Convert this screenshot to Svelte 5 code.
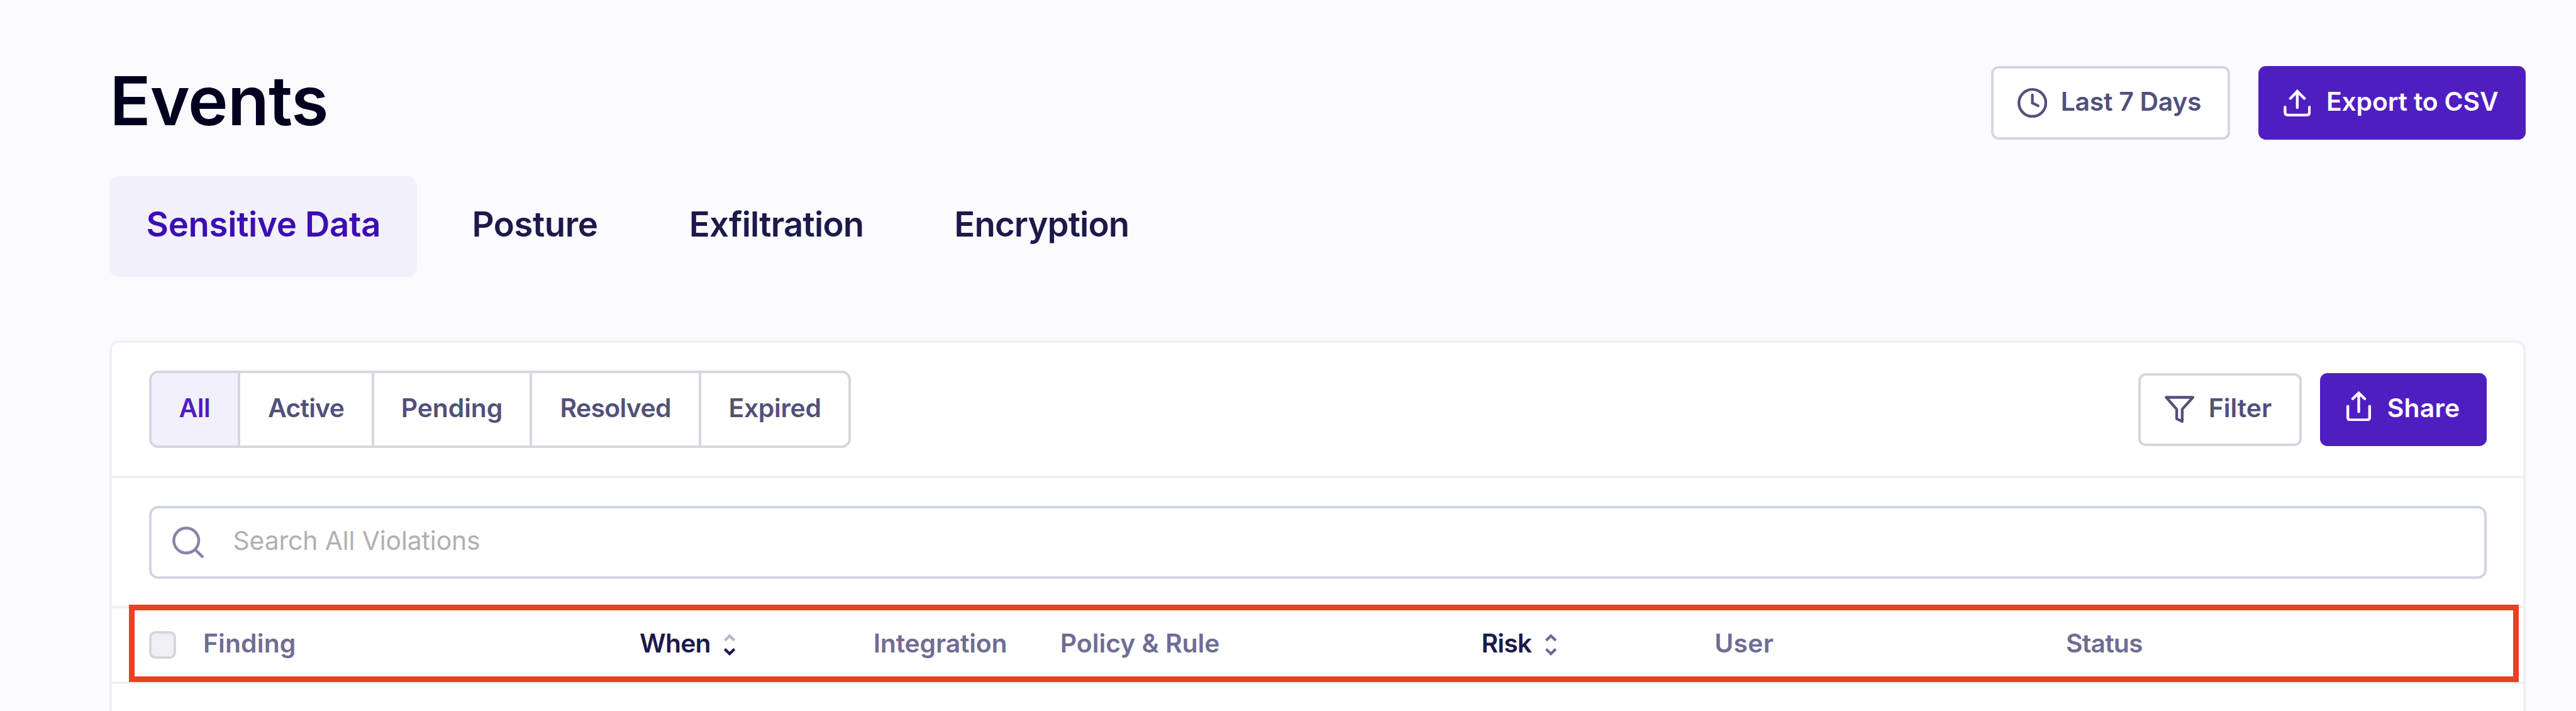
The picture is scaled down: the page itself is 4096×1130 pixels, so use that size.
<script>
  // tracking: letter spacing in thousandths of an em
  const tabs = [
    { label: 'Sensitive Data', width: 538, tracking: -6, active: true },
    { label: 'Posture', width: 348, tracking: -8 },
    { label: 'Exfiltration', width: 432, tracking: -15 },
    { label: 'Encryption', width: 434, tracking: -16 },
  ];

  const statuses = [
    { label: 'All', width: 156, tracking: -11, active: true },
    { label: 'Active', width: 234, tracking: -18 },
    { label: 'Pending', width: 276.5, tracking: -2 },
    { label: 'Resolved', width: 296, tracking: -16 },
    { label: 'Expired', width: 257.5, tracking: -7 },
  ];

  const columns = [
    { label: 'Finding', tracking: 4 },
    { label: 'When', tracking: -20, sort: 'desc' },
    { label: 'Integration', tracking: -4 },
    { label: 'Policy & Rule', tracking: 0 },
    { label: 'Risk', tracking: -20, sort: 'none' },
    { label: 'User', tracking: 7 },
    { label: 'Status', tracking: -20 },
  ];
</script>

{#snippet text(label, tracking)}
  <span class="text" style:letter-spacing="{tracking / 1000}em">{label}</span>
{/snippet}

<main>
  <header>
    <h1>Events</h1>
    <div class="actions">
      <button class="btn outline range">
        <svg class="clock" viewBox="0 0 52 52"><circle cx="26" cy="26" r="23.6" /><path d="M26 12v14l10 5" /></svg>
        {@render text('Last 7 Days', -7)}
      </button>
      <button class="btn solid export">
        <svg class="upload" viewBox="0 0 48 48"><path d="M24 3v29M12 16 24 3.5 36.500 16M2.600 31v9q0 5 5 5h32.800q5 0 5-5v-9" /></svg>
        {@render text('Export to CSV', -4)}
      </button>
    </div>
  </header>

  <nav>
    {#each tabs as tab}
      <a class:active={tab.active} style:width="{tab.width / 100}rem">{@render text(tab.label, tab.tracking)}</a>
    {/each}
  </nav>

  <section class="card">
    <div class="toolbar">
      <div class="segments">
        {#each statuses as s}
          <button class:active={s.active} style:width="{s.width / 100}rem">{@render text(s.label, s.tracking)}</button>
        {/each}
      </div>
      <div class="actions tight">
        <button class="btn outline filter">
          <svg class="funnel" viewBox="0 0 52 48"><path d="M2.600 2.700h46.800L30.700 23.500v21.300L21 40.300V23.500z" /></svg>
          {@render text('Filter', 0)}
        </button>
        <button class="btn solid share">
          <svg class="share-icon" viewBox="0 0 43 52"><path d="M21.500 3v32.500M11 13 21.500 2.800 32 13M2.400 26v19.500q0 4.500 4.500 4.500h29.200q4.500 0 4.500-4.500V26" /></svg>
          {@render text('Share', 5)}
        </button>
      </div>
    </div>

    <div class="search-row">
      <label class="search">
        <svg class="lens" viewBox="0 0 55 55"><circle cx="24.400" cy="24.300" r="21.800" /><path d="m40 40 12.500 12.300" /></svg>
        {@render text('Search All Violations', -3)}
      </label>
    </div>

    <div class="columns">
      <i class="checkbox"></i>
      {#each columns as col}
        <div class="column" class:sortable={col.sort}>
          {@render text(col.label, col.tracking)}
          {#if col.sort}
            <svg class="sort" viewBox="0 0 20 37">
              <path class:faded={col.sort === 'desc'} class:muted={col.sort === 'none'} d="M1.500 11 10 2.800 18.500 11" />
              <path class:muted={col.sort === 'none'} d="M1.500 26 10 34.200 18.500 26" />
            </svg>
          {/if}
        </div>
      {/each}
      <div class="highlight"></div>
    </div>
  </section>
</main>

<style>
  :global(html) { font-size: calc(100vw / 45.08); }
  :global(body) { margin: 0; background: #fbfaff; overflow: hidden; }

  main {
    box-sizing: border-box;
    display: flex;
    flex-direction: column;
    height: 100vh;
    padding: 1.16rem 0.88rem 0 1.92rem;
    background: #fbfaff;
    font-family: Inter, 'Liberation Sans', sans-serif;
    font-size: 0.45rem;
    font-weight: 600;
    line-height: 1.2;
    color: #52507b;
    overflow: hidden;
  }

  button {
    box-sizing: border-box;
    margin: 0;
    padding: 0;
    border: 0;
    background: none;
    font: inherit;
    color: inherit;
  }

  svg { flex: none; display: block; fill: none; stroke: currentColor; stroke-width: 4.8; }

  .text { padding-bottom: 0.107em; white-space: nowrap; }

  header { display: flex; flex: none; justify-content: space-between; align-items: center; height: 1.28rem; }

  h1 {
    margin: 0;
    padding-bottom: 0.06rem;
    font-size: 1.185rem;
    font-weight: 600;
    line-height: 1.2;
    letter-spacing: -0.008em;
    color: #02001f;
  }

  .actions { display: flex; gap: 0.49rem; }
  .tight { gap: 0.32rem; }

  .btn { display: flex; align-items: center; height: 1.28rem; border-radius: 0.13rem; }
  .outline { border: 4px solid #d6d5e0; background: #fff; }
  .solid { background: #4f1ec1; color: #fff; }

  .range { width: 4.19rem; padding-left: 0.42rem; gap: 0.24rem; }
  .export { width: 4.68rem; padding-left: 0.44rem; gap: 0.27rem; }
  .filter { width: 2.86rem; padding-left: 0.42rem; gap: 0.25rem; }
  .share { width: 2.92rem; padding-left: 0.465rem; gap: 0.285rem; }

  .clock { width: 0.52rem; height: 0.52rem; }
  .clock path { stroke-linecap: round; }
  .upload { width: 0.48rem; height: 0.48rem; stroke-linecap: round; }
  .funnel { width: 0.52rem; height: 0.48rem; stroke-linejoin: round; }
  .share-icon { width: 0.43rem; height: 0.52rem; margin-bottom: 0.12rem; stroke-linecap: round; }
  .lens { width: 0.55rem; height: 0.55rem; stroke: #8785a6; stroke-width: 5; stroke-linecap: round; }

  nav { display: flex; flex: none; gap: 0.32rem; height: 1.76rem; margin-top: 0.64rem; }
  nav a {
    box-sizing: border-box;
    display: flex;
    align-items: center;
    padding-left: 0.64rem;
    border-radius: 0.16rem;
    font-size: 0.6rem;
    color: #1c194b;
  }
  nav a.active { background: #f2f0fa; color: #3c0db3; }

  .card {
    display: flex;
    flex: 1;
    flex-direction: column;
    margin-top: 1.12rem;
    border: 4px solid #f0eff5;
    border-bottom: 0;
    border-radius: 0.16rem 0.16rem 0 0;
    background: #fff;
  }

  .toolbar,
  .search-row,
  .columns { box-sizing: border-box; flex: none; padding: 0 0.64rem; border-bottom: 4px solid #f0eff5; }

  .toolbar { display: flex; justify-content: space-between; align-items: center; height: 2.36rem; }

  .segments {
    box-sizing: border-box;
    display: flex;
    height: 1.36rem;
    border: 4px solid #d6d5e0;
    border-radius: 0.16rem;
    overflow: hidden;
  }
  .segments button { display: flex; align-items: center; justify-content: center; border-right: 4px solid #d6d5e0; }
  .segments button:last-child { border-right: 0; }
  .segments button.active { background: #f2f0fa; color: #4f1ec1; }

  .search-row { height: 2.28rem; padding-top: 0.48rem; }
  .search {
    box-sizing: border-box;
    display: flex;
    align-items: center;
    gap: 0.51rem;
    height: 1.28rem;
    padding-left: 0.37rem;
    border: 4px solid #ced6e1;
    border-radius: 0.16rem;
    font-weight: 400;
    color: #b0b0b0;
  }

  .columns {
    position: relative;
    display: grid;
    grid-template-columns: 0.95rem 7.64rem 4.09rem 3.27rem 7.37rem 4.08rem 6.15rem 1fr;
    align-items: center;
    height: 1.32rem;
    color: #6f6d93;
  }
  .column { display: flex; align-items: center; gap: 0.235rem; }
  .sortable { color: #1c194b; }
  .sort { width: 0.2rem; height: 0.37rem; }
  .faded { stroke: #b9b7cc; }
  .muted { stroke: #6f6d93; }

  .checkbox {
    box-sizing: border-box;
    width: 0.48rem;
    height: 0.48rem;
    border: 4px solid #d6d5e0;
    border-radius: 0.11rem;
    background: #f0eff4;
  }

  /* Callout frame drawn over the column headings */
  .highlight {
    position: absolute;
    box-sizing: border-box;
    top: -0.07rem;
    left: 0.29rem;
    right: 0.075rem;
    height: 1.36rem;
    border: 0.1rem solid #ea4025;
  }
</style>
